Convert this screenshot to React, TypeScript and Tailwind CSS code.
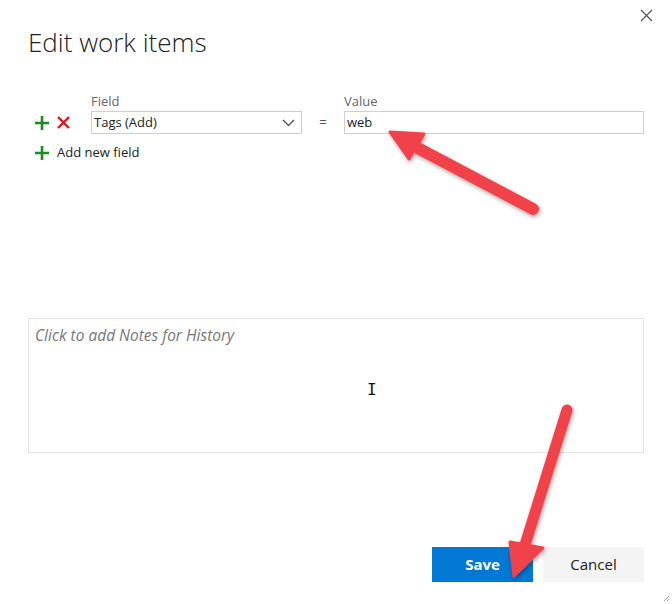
import React from 'react';

const font = { fontFamily: '"Open Sans", "Noto Sans", sans-serif' };

const Plus = () => (
  <svg width="14" height="14" viewBox="0 0 14 14" className="shrink-0">
    <path d="M7 0v14M0 7h14" stroke="#1f8a1f" strokeWidth="2.6" />
  </svg>
);

const Cross = () => (
  <svg width="13" height="13" viewBox="0 0 13 13" className="shrink-0">
    <path d="M1 1l11 11M12 1L1 12" stroke="#e0141e" strokeWidth="2.4" />
  </svg>
);

// red callout arrows drawn over the dialog
const Arrows = () => (
  <svg className="absolute inset-0 pointer-events-none" width="672" height="604" viewBox="0 0 672 604">
    <defs>
      <filter id="sh" x="-20%" y="-20%" width="140%" height="140%">
        <feDropShadow dx="1" dy="2" stdDeviation="2" floodColor="#000" floodOpacity="0.35" />
      </filter>
    </defs>
    <g filter="url(#sh)" fill="#f2424a" stroke="#f2424a" strokeLinecap="round" strokeLinejoin="round">
      <line x1="533" y1="209" x2="412" y2="145" strokeWidth="12" />
      <polygon points="390,132 424,134 409,159" strokeWidth="3" />
      <line x1="567" y1="410" x2="524" y2="548" strokeWidth="11" />
      <polygon points="514,576 510,542 543,548" strokeWidth="3" />
    </g>
  </svg>
);

export default function App() {
  return (
    <div className="relative w-[672px] h-[604px] bg-white text-[#333] overflow-hidden" style={font}>
      <button className="absolute right-[19px] top-[9px] text-[#444]">
        <svg width="13" height="13" viewBox="0 0 13 13">
          <path d="M1 1l11 11M12 1L1 12" stroke="#555" strokeWidth="1.2" />
        </svg>
      </button>

      <div className="flex flex-col px-[28px] h-full">
        <h1 className="pt-[24px] text-[26px] font-light leading-[36px] text-[#222]">Edit work items</h1>

        <div className="mt-[33px] flex items-end">
          <div className="flex items-center gap-[8px] w-[63px] pl-[7px] h-[23px]">
            <Plus />
            <Cross />
          </div>
          <div className="flex flex-col w-[211px]">
            <label className="text-[13px] leading-[17px] text-[#666] mb-[1px]">Field</label>
            <div className="flex items-center justify-between h-[23px] border border-[#cfcfcf] px-[2px]">
              <span className="text-[13px] text-[#222]">Tags (Add)</span>
              <svg width="13" height="8" viewBox="0 0 13 8" className="mr-[4px]">
                <path d="M1 1l5.5 5.5L12 1" stroke="#444" strokeWidth="1.2" fill="none" />
              </svg>
            </div>
          </div>
          <div className="w-[42px] h-[23px] flex items-center justify-center text-[13px] text-[#555]">=</div>
          <div className="flex flex-col flex-1">
            <label className="text-[13px] leading-[17px] text-[#666] mb-[1px]">Value</label>
            <div className="flex items-center h-[23px] border border-[#cfcfcf] px-[2px]">
              <span className="text-[13px] text-[#222]">web</span>
            </div>
          </div>
        </div>

        <div className="mt-[9px] flex items-center gap-[8px] pl-[7px]">
          <Plus />
          <span className="text-[13px] text-[#222]">Add new field</span>
        </div>

        <div className="mt-[155px] h-[135px] border border-[#e4e4e4] px-[6px] pt-[4px] relative">
          <span className="italic text-[15.5px] text-[#777]">Click to add Notes for History</span>
          <span className="absolute left-[338px] top-[63px] text-[16px] leading-none text-[#111]" style={{ fontFamily: '"DejaVu Sans Mono", monospace' }}>I</span>
        </div>

        <div className="mt-[94px] flex justify-end gap-[10px]">
          <button className="w-[101px] h-[35px] bg-[#0078d4] text-white text-[15px] font-bold">Save</button>
          <button className="w-[101px] h-[35px] bg-[#f4f4f4] text-[#222] text-[15px]">Cancel</button>
        </div>
      </div>

      <svg className="absolute right-[2px] bottom-[2px]" width="7" height="7" viewBox="0 0 7 7">
        <path d="M6 1L1 6M6 4L4 6" stroke="#999" strokeWidth="1" />
      </svg>

      <Arrows />
    </div>
  );
}
